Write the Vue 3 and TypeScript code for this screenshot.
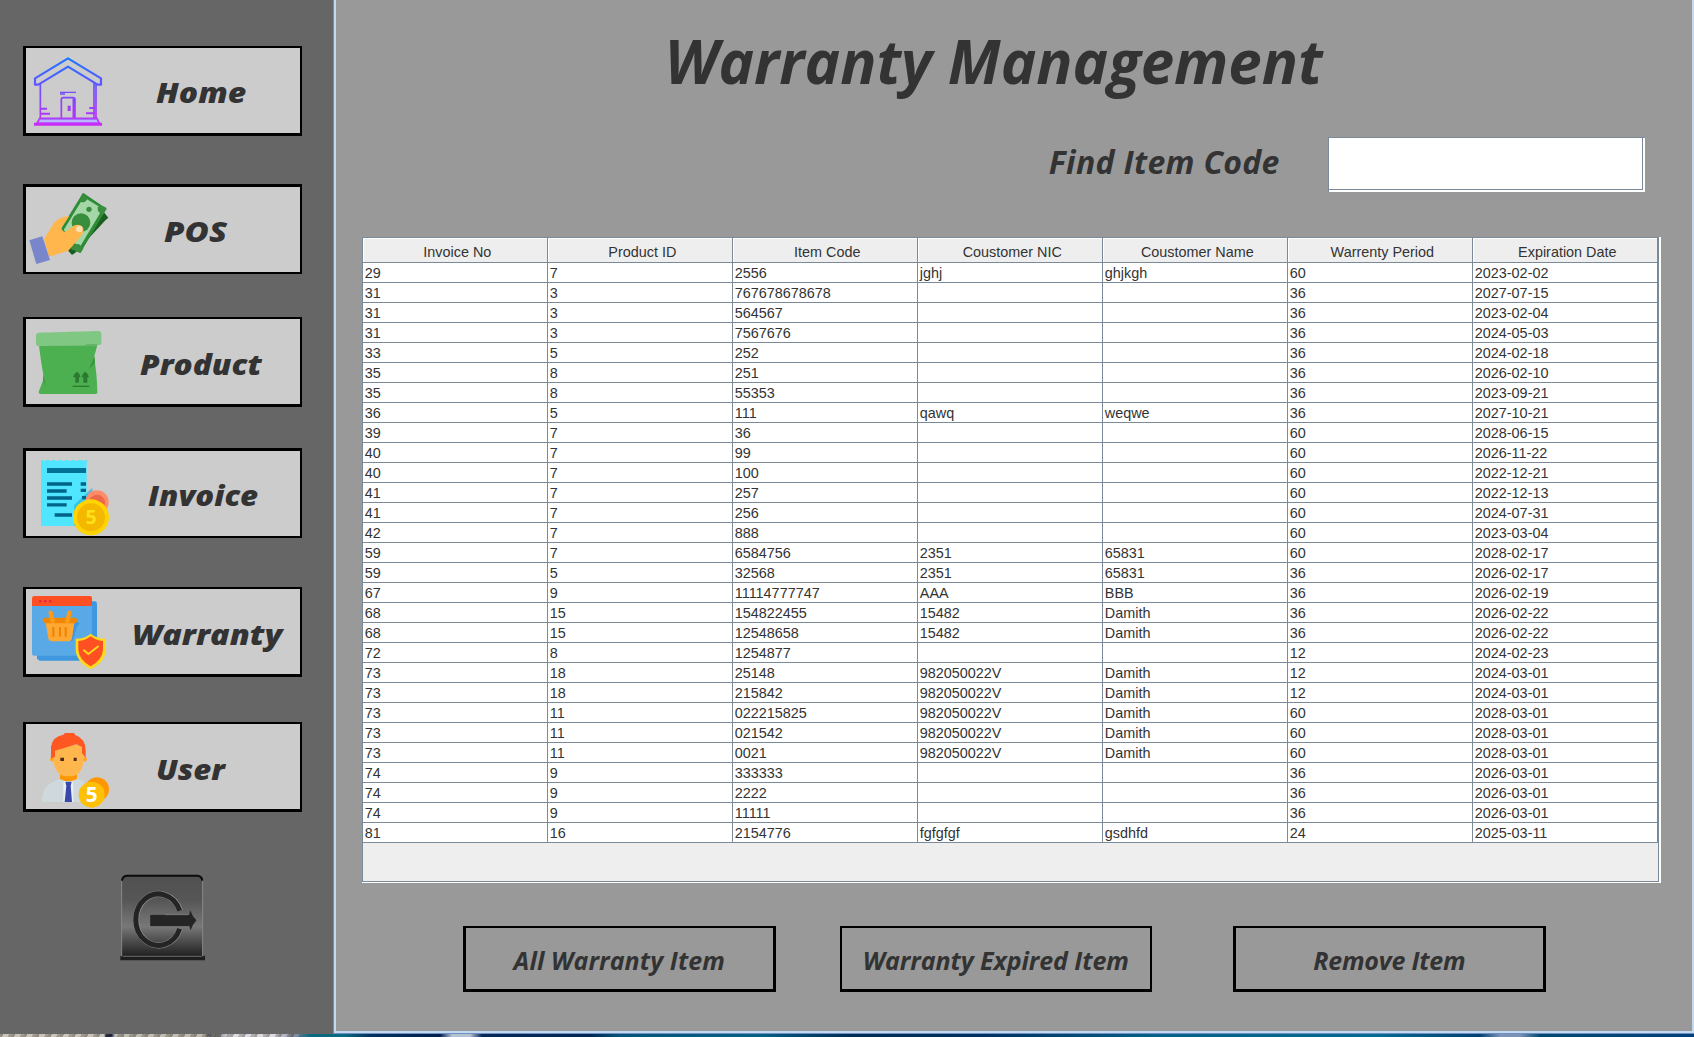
<script setup lang="ts">
interface NavItem {
  key: string
  label: string
  gap: number
  heavyTop: boolean
  viewBox: string
  left: number
  top: number
  stretch: number
}

const navItems: NavItem[] = [
  { key: 'home', label: 'Home', gap: 46, heavyTop: false, viewBox: '78 54 258 255', left: 44, top: 1, stretch: 1.1 },
  { key: 'pos', label: 'POS', gap: 48, heavyTop: true, viewBox: '78 471 258 255', left: 52, top: 1, stretch: 1.14 },
  { key: 'product', label: 'Product', gap: 43, heavyTop: false, viewBox: '78 57 258 255', left: 28, top: 2, stretch: 1.09 },
  { key: 'invoice', label: 'Invoice', gap: 41, heavyTop: true, viewBox: '78 453 258 255', left: 36, top: 1, stretch: 1.075 },
  { key: 'warranty', label: 'Warranty', gap: 49, heavyTop: false, viewBox: '78 57 258 255', left: 20, top: 2, stretch: 1.115 },
  { key: 'user', label: 'User', gap: 45, heavyTop: false, viewBox: '78 462 258 255', left: 44, top: 2, stretch: 1.07 },
]

const columns: string[] = [
  'Invoice No', 'Product ID', 'Item Code', 'Coustomer NIC', 'Coustomer Name', 'Warrenty Period', 'Expiration Date',
]

const rows: string[][] = [
  ['29', '7', '2556', 'jghj', 'ghjkgh', '60', '2023-02-02'],
  ['31', '3', '767678678678', '', '', '36', '2027-07-15'],
  ['31', '3', '564567', '', '', '36', '2023-02-04'],
  ['31', '3', '7567676', '', '', '36', '2024-05-03'],
  ['33', '5', '252', '', '', '36', '2024-02-18'],
  ['35', '8', '251', '', '', '36', '2026-02-10'],
  ['35', '8', '55353', '', '', '36', '2023-09-21'],
  ['36', '5', '111', 'qawq', 'weqwe', '36', '2027-10-21'],
  ['39', '7', '36', '', '', '60', '2028-06-15'],
  ['40', '7', '99', '', '', '60', '2026-11-22'],
  ['40', '7', '100', '', '', '60', '2022-12-21'],
  ['41', '7', '257', '', '', '60', '2022-12-13'],
  ['41', '7', '256', '', '', '60', '2024-07-31'],
  ['42', '7', '888', '', '', '60', '2023-03-04'],
  ['59', '7', '6584756', '2351', '65831', '60', '2028-02-17'],
  ['59', '5', '32568', '2351', '65831', '36', '2026-02-17'],
  ['67', '9', '11114777747', 'AAA', 'BBB', '36', '2026-02-19'],
  ['68', '15', '154822455', '15482', 'Damith', '36', '2026-02-22'],
  ['68', '15', '12548658', '15482', 'Damith', '36', '2026-02-22'],
  ['72', '8', '1254877', '', '', '12', '2024-02-23'],
  ['73', '18', '25148', '982050022V', 'Damith', '12', '2024-03-01'],
  ['73', '18', '215842', '982050022V', 'Damith', '12', '2024-03-01'],
  ['73', '11', '022215825', '982050022V', 'Damith', '60', '2028-03-01'],
  ['73', '11', '021542', '982050022V', 'Damith', '60', '2028-03-01'],
  ['73', '11', '0021', '982050022V', 'Damith', '60', '2028-03-01'],
  ['74', '9', '333333', '', '', '36', '2026-03-01'],
  ['74', '9', '2222', '', '', '36', '2026-03-01'],
  ['74', '9', '11111', '', '', '36', '2026-03-01'],
  ['81', '16', '2154776', 'fgfgfgf', 'gsdhfd', '24', '2025-03-11'],
]
</script>

<template>
  <div class="screen">
    <div class="window">
      <nav class="sidebar">
        <button
          v-for="item in navItems"
          :key="item.key"
          class="nav"
          :class="{ 'heavy-top': item.heavyTop }"
          :style="{ marginTop: item.gap + 'px' }"
        >
          <svg class="icon" :viewBox="item.viewBox">
            <g v-if="item.key === 'home'" fill="none" stroke="url(#homeGrad)" stroke-width="6.5">
              <defs>
                <linearGradient id="homeGrad" gradientUnits="userSpaceOnUse" x1="0" y1="82" x2="0" y2="288">
                  <stop offset="0" stop-color="#1878ff" />
                  <stop offset=".45" stop-color="#6a50ff" />
                  <stop offset="1" stop-color="#cc2cf8" />
                </linearGradient>
              </defs>
              <path d="M105 145 L204 85 L303 145 V164 H293 L204 110 L115 164 H105 Z" stroke-linejoin="round" />
              <path d="M121 160 V264 M282 158 V264 M288 160 V264" stroke-width="5" />
              <path d="M180 187 H228 M180 192 H195" stroke-width="4" />
              <path d="M184 264 V208 Q184 203 190 203 H219 Q225 203 225 208 V264 M220 206 V264" stroke-width="5" />
              <path d="M203 235 H212" stroke-width="16" />
              <path d="M122 236 H141 M268 234 H286 M122 251 H150 M258 250 H286" stroke-width="6" />
              <path d="M119 265 H291 L298 280 H111 Z" fill="#b9b5ff" stroke-width="5" />
              <path d="M102 283 H306" stroke-width="9" />
              <path d="M118 268 H292" stroke-width="3" stroke="#9a70ff" />
            </g>

            <g v-else-if="item.key === 'pos'">
              <path d="M313 548 L325 563 L317 570 L226 668 L216 675 L203 661 Z" fill="#1b5e20" />
              <path d="M249 488 L320 536 L241 669 L213 657 L182 598 Z" fill="#2e8b36" />
              <path d="M251 502 L308 536 L238 654 L191 600 Z" fill="#a5d6a7" />
              <path d="M245 494 q14 3 17 12 q-5 14 -22 10z M320 534 L308 552 Q291 549 293 531 Q304 524 320 534z M241 669 L214 656 Q219 641 236 642 Q247 650 250 656z" fill="#388e3c" />
              <circle cx="267" cy="538" r="8" fill="#388e3c" />
              <circle cx="243" cy="578" r="28" fill="#388e3c" />
              <path d="M132 627 L163 577 Q177 561 208 558 L184 594 Q187 605 195 606 L223 586 Q244 580 250 596 Q251 608 245 616 L205 662 L147 680 Z" fill="#ffb74d" />
              <circle cx="238" cy="597" r="10" fill="#ffddb0" />
              <path d="M88 631 L127 619 L150 690 L109 702 Z" fill="#7986cb" />
            </g>

            <g v-else-if="item.key === 'product'">
              <path d="M117 136 H292 L282 172 Q291 220 292 278 Q292 282 286 282 H121 Q115 282 117 273 L132 234 Q123 190 117 136z" fill="#4caf50" />
              <path d="M116 98 L294 93 Q304 93 304 102 V131 Q304 134 298 135 L113 138 Q108 137 108 131 V105 Q108 99 116 98z" fill="#81c784" />
              <path d="M258 132 H292 L290 138 H258z" fill="#66b36a" />
              <path d="M284 168 L267 207 L285 190z M130 222 L129 239 L138 261z" fill="#3d9442" />
              <path d="M226 248 V232 H219 Q223 218 232 215 Q240 221 242 232 H237 V248z M250 248 V232 H245 Q248 219 256 215 Q265 221 267 232 H262 V248z" fill="#2b7a30" />
              <path d="M218 259 H268" stroke="#2b7a30" stroke-width="4" />
            </g>

            <g v-else-if="item.key === 'invoice'">
              <path d="M123 480 h5 q5 6 10 0 h9 q5 6 10 0 h9 q6 6 12 0 h7 q6 6 12 0 h7 q6 6 12 0 h8 q6 6 12 0 h9 q6 6 12 0 h7 l-4 6 V678 H123z" fill="#50e6ff" />
              <path d="M141 504 H258 V519 H141z" fill="#007094" />
              <path d="M141 552 H216 M141 573 H200 M141 594 H216 M141 614.500 H200 M164 645 H216" stroke="#006488" stroke-width="10" />
              <path d="M277 563 L248 590 L222 615 V678 H244 L278 620z" fill="#20b4df" opacity=".65" />
              <path d="M242 552 H258 M242 571 H258 M246 593 H258" stroke="#006488" stroke-width="10" />
              <circle cx="291" cy="606" r="35" fill="#ff8c69" />
              <circle cx="291" cy="608" r="24" fill="#eb6849" />
              <circle cx="273" cy="652" r="54" fill="#ffd400" />
              <circle cx="273" cy="652" r="42" fill="#f5b800" />
              <text x="273" y="673" class="glyph" fill="#ffe11b" font-size="58">5</text>
            </g>

            <g v-else-if="item.key === 'warranty'">
              <path d="M112 94 H284 Q291 94 291 101 V272 H119 L111 266z" fill="#3f98df" />
              <path d="M96 84 H276 V257 H102 Q96 257 96 252z" fill="#5aa9e7" />
              <path d="M96 108 V84 Q97 78 103 78 H270 Q276 78 276 84 V108z" fill="#ff5023" />
              <path d="M117 94 h7 M132 94 h7 M147 94 h7" stroke="#e51c4b" stroke-width="6" />
              <path d="M223 150 L239 160 L232 168 L218 212 L208 214z" fill="#3f98df" />
              <path d="M137 158 H223 L216 205 Q214 214 206 214 H156 Q147 214 145 205z" fill="#ffa733" />
              <path d="M134 143 H226 Q232 144 232 152 Q231 159 224 160 H136 Q129 158 127 149z" fill="#f08705" />
              <path d="M152 128 L158 153 M208 128 L202 153" stroke="#ff9b18" stroke-width="13" stroke-linecap="round" />
              <path d="M160 171 V200 M180 171 V200 M197 171 V200" stroke="#ef8200" stroke-width="6" />
              <path d="M272 191 Q290 206 318 206 V239 Q316 275 272 298 Q229 275 227 239 V206 Q255 206 272 191z" fill="#ffd91b" />
              <path d="M272 199 Q287 211 309 213 V239 Q307 269 272 289 Q237 269 235 239 V213 Q258 211 272 199z" fill="#ff5023" />
              <path d="M250 239 L265 252 L296 228" fill="none" stroke="#ffd91b" stroke-width="6" />
            </g>

            <g v-else>
              <path d="M126 696 Q124 654 158 635 L181 626 H232 L250 634 L270 696z" fill="#cfd8dc" />
              <path d="M180 609 H231 V627 Q205 641 180 627z" fill="#ff9800" />
              <circle cx="157" cy="568" r="7" fill="#ffa726" />
              <circle cx="254" cy="568" r="7" fill="#ffa726" />
              <path d="M160 525 H250 V575 Q246 614 217 619 H194 Q166 612 160 575z" fill="#ffb74d" />
              <path d="M153 566 V530 Q157 500 190 494 L195 489 H222 L226 495 Q256 506 257 540 V564 L246 549 V531 L229 523 L165 542 V560z" fill="#ff5722" />
              <path d="M181 568 h11 M221 568 h9" stroke="#4e2a1e" stroke-width="10" />
              <path d="M190 634 H220 V696 H190z" fill="#e9eef0" />
              <path d="M196 635 H215 L212 647 L216 696 H194 L199 647z" fill="#3949ab" />
              <circle cx="291" cy="658" r="36" fill="#ff9800" />
              <circle cx="275" cy="674" r="39" fill="#ffc107" />
              <text x="275" y="696" class="glyph" fill="#fff" font-size="62">5</text>
            </g>
          </svg>
          <span
            class="nav-label"
            :style="{
              marginLeft: item.left + 'px',
              paddingTop: item.top * 2 + 'px',
              transform: 'scaleX(' + item.stretch + ')',
            }"
          >{{ item.label }}</span>
        </button>

        <button class="exit" aria-label="Log out">
          <svg viewBox="60 40 255 264">
            <defs>
              <linearGradient id="plate" x1="0" y1="0" x2="0" y2="1">
                <stop offset="0" stop-color="#505050" />
                <stop offset=".3" stop-color="#565656" />
                <stop offset=".62" stop-color="#787878" />
                <stop offset=".8" stop-color="#4c4c4c" />
                <stop offset="1" stop-color="#1c1c1c" />
              </linearGradient>
            </defs>
            <path d="M61 288 H315 V302 H61z" fill="#1f1f1f" />
            <rect x="65" y="48" width="243" height="246" rx="13" fill="url(#plate)" />
            <path d="M65 290 V63 M308 290 V63" stroke="#888" stroke-width="3" />
            <path d="M66 63 Q68 48 82 48 H292 Q306 49 307 63" fill="none" stroke="#0b0b0b" stroke-width="6" />
            <path d="M69 290 H305" stroke="#5e5e5e" stroke-width="4" />
            <path d="M240 153 A68 77 0 1 0 240 207" fill="none" stroke="#8c8c8c" stroke-width="18" />
            <path d="M239 153 A68 77 0 1 0 239 207" fill="none" stroke="#242424" stroke-width="15" />
            <path d="M152 167 H269 L271 155 Q275 170 288 182 Q276 195 272 209 L269 198 H152z" fill="#252525" stroke="#1b1b1b" stroke-width="2" />
            <path d="M195 165 H266" stroke="#888" stroke-width="2" />
          </svg>
        </button>
      </nav>

      <main class="panel">
        <h1 class="title">Warranty Management</h1>
        <div class="search">
          <label class="search-label" for="code">Find Item Code</label>
          <span class="field"><input id="code" type="text" /></span>
        </div>
        <div class="scroller">
          <div class="scroller-inner">
            <div class="row head">
              <div v-for="c in columns" :key="c" class="th">{{ c }}</div>
            </div>
            <div v-for="(r, i) in rows" :key="i" class="row">
              <div v-for="(v, j) in r" :key="j" class="td">{{ v }}</div>
            </div>
          </div>
        </div>
        <div class="actions">
          <button class="action all"><span>All Warranty Item</span></button>
          <button class="action expired"><span>Warranty Expired Item</span></button>
          <button class="action remove"><span>Remove Item</span></button>
        </div>
      </main>
    </div>
    <div class="wallpaper"></div>
  </div>
</template>

<style>
body {
  margin: 0;
  overflow: hidden;
}
</style>

<style scoped>
* {
  box-sizing: border-box;
}
.screen {
  width: 1694px;
  height: 1037px;
  display: flex;
  flex-direction: column;
  overflow: hidden;
  color: #333;
}
button {
  padding: 0;
  border-radius: 0;
  color: inherit;
}
.window {
  display: flex;
  height: 1034px;
}
.sidebar {
  width: 333px;
  background: #666;
  display: flex;
  flex-direction: column;
  padding-left: 23px;
}
.nav {
  width: 279px;
  height: 90px;
  flex: none;
  border: solid #000;
  border-width: 2px 2px 3px 3px;
  background: #ccc;
  display: flex;
  align-items: center;
}
.nav.heavy-top {
  border-width: 3px 2px 2px 3px;
}
.icon {
  width: 86px;
  height: 85px;
  flex: none;
}
.glyph {
  font-family: "Open Sans", sans-serif;
  font-weight: 700;
  text-anchor: middle;
}
.nav-label {
  font: italic 800 29px/40px "Open Sans", sans-serif;
  white-space: nowrap;
  transform-origin: left center;
}
.exit {
  width: 85px;
  height: 88px;
  margin: 61px 0 0 97px;
  border: 0;
  background: none;
}
.exit svg {
  display: block;
  width: 85px;
  height: 88px;
}
.panel {
  width: 1361px;
  background: #999;
  border: solid #c3d9f2;
  border-width: 0 2px 2px 2px;
  outline: 1px solid #6f8fc4;
  margin: 0 0 1px 1px;
  display: flex;
  flex-direction: column;
}
.title {
  margin: 17px 0 0 329px;
  height: 88px;
  font: italic 700 60px/88px "Open Sans", sans-serif;
  white-space: nowrap;
}
.search {
  margin-top: 32px;
  height: 55px;
  display: flex;
  align-items: center;
}
.search-label {
  width: 279px;
  margin-left: 713px;
  padding-bottom: 6px;
  font: italic 700 32px/48px "Open Sans", sans-serif;
  letter-spacing: .3px;
  white-space: nowrap;
}
.field {
  width: 317px;
  height: 55px;
  background: #fff;
  border: solid #7a8a99;
  border-width: 1px 0 0 1px;
  padding: 0 2px 2px 0;
}
.field input {
  display: block;
  width: 314px;
  height: 52px;
  border: solid #7a8a99;
  border-width: 0 1px 1px 0;
  background: #fff;
  outline: none;
  padding: 0 8px;
  font: 20px "Liberation Sans", sans-serif;
}
.scroller {
  margin: 45px 0 0 26px;
  width: 1299px;
  height: 646px;
  background: #fff;
  padding: 0 2px 1px 0;
}
.scroller-inner {
  width: 1297px;
  height: 645px;
  border: 1px solid #7a8a99;
  background: #eee;
  font: 14.400px/19px "Liberation Sans", Arial, sans-serif;
}
.row {
  display: grid;
  grid-template-columns: repeat(7, 185px);
  grid-template-rows: 20px;
  height: 20px;
}
.row.head {
  height: 25px;
  grid-template-rows: 25px;
}
.th {
  border: solid #7a8a99;
  border-width: 0 1px 1px 0;
  box-shadow: inset 1px 1px 0 #fff;
  text-align: center;
  line-height: 28px;
  padding-left: 5px;
}
.td {
  background: #fff;
  border: solid #7a8a99;
  border-width: 0 1px 1px 0;
  padding-left: 2px;
  line-height: 20px;
  white-space: nowrap;
}
.actions {
  display: flex;
  margin: 43px 0 0 127px;
}
.action {
  width: 313px;
  height: 66px;
  border: solid #000;
  border-width: 2px 3px 3px 3px;
  background: #999;
  font: italic 700 25px/36px "Open Sans", sans-serif;
  white-space: nowrap;
  padding-top: 3px;
}
.all {
  letter-spacing: .1px;
}
.expired {
  width: 312px;
  margin-left: 64px;
  border-width: 2px 2px 3px 2px;
  letter-spacing: -.08px;
}
.remove {
  margin-left: 81px;
  letter-spacing: -.2px;
}
.wallpaper {
  height: 3px;
  background:
    repeating-linear-gradient(115deg, rgba(60, 55, 45, .35) 0 3px, rgba(255, 255, 255, .15) 3px 8px, rgba(90, 85, 60, .3) 8px 11px) 0 0 / 300px 3px no-repeat,
    linear-gradient(90deg, #c0bbb0 0 104px, #101a40 106px 112px, #b5b1a6 115px 205px, #3c3c40 210px, #d8d4de 230px 275px, #6f7890 295px, #0b6a80 310px 345px, #04315e 370px, #02204a 440px, #b5c3ce 452px 470px, #062a58 482px, #02284f 590px, #045678 620px, #046082 760px, #032c52 850px, #03305d 980px, #046286 1160px, #046a90 1380px, #03406f 1480px, #7b93b5 1500px 1520px, #024a70 1540px, #024078);
}
</style>
